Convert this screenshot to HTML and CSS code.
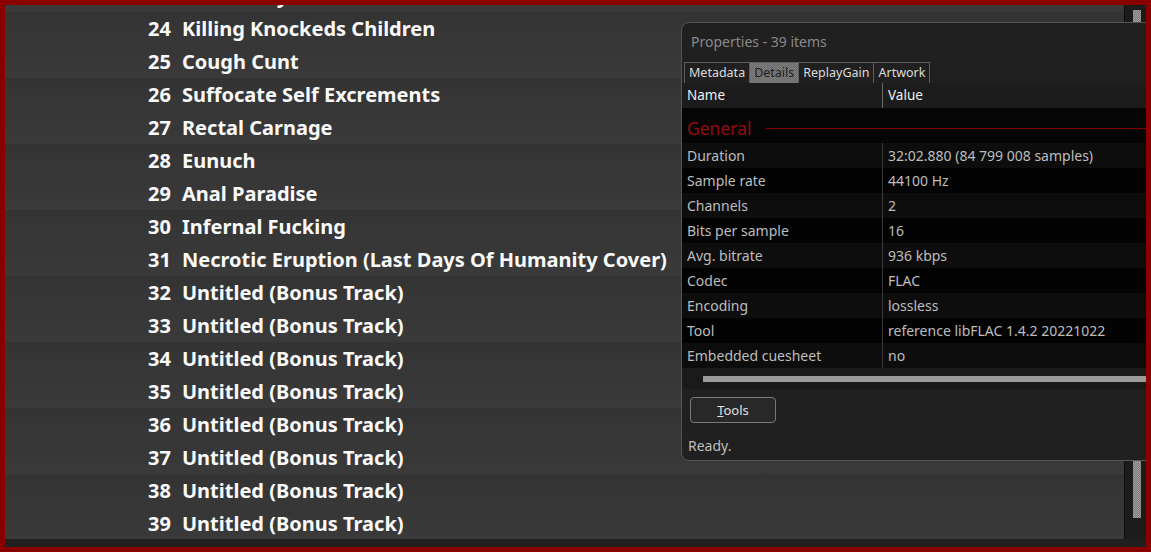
FILE: index.html
```html
<!DOCTYPE html>
<html lang="en">
<head>
    <meta charset="UTF-8">
    <title>Playlist - Properties</title>
    <link rel="stylesheet" href="styles.css">
</head>
<body>
    <div class="frame">
        <div class="main">
            <ol class="tracks">
                <li class="track"><span class="num">23</span><span class="title">Dead Body</span></li>
                <li class="track"><span class="num">24</span><span class="title">Killing Knockeds Children</span></li>
                <li class="track"><span class="num">25</span><span class="title">Cough Cunt</span></li>
                <li class="track"><span class="num">26</span><span class="title">Suffocate Self Excrements</span></li>
                <li class="track"><span class="num">27</span><span class="title">Rectal Carnage</span></li>
                <li class="track"><span class="num">28</span><span class="title">Eunuch</span></li>
                <li class="track"><span class="num">29</span><span class="title">Anal Paradise</span></li>
                <li class="track"><span class="num">30</span><span class="title">Infernal Fucking</span></li>
                <li class="track"><span class="num">31</span><span class="title">Necrotic Eruption (Last Days Of Humanity Cover)</span></li>
                <li class="track"><span class="num">32</span><span class="title">Untitled (Bonus Track)</span></li>
                <li class="track"><span class="num">33</span><span class="title">Untitled (Bonus Track)</span></li>
                <li class="track"><span class="num">34</span><span class="title">Untitled (Bonus Track)</span></li>
                <li class="track"><span class="num">35</span><span class="title">Untitled (Bonus Track)</span></li>
                <li class="track"><span class="num">36</span><span class="title">Untitled (Bonus Track)</span></li>
                <li class="track"><span class="num">37</span><span class="title">Untitled (Bonus Track)</span></li>
                <li class="track"><span class="num">38</span><span class="title">Untitled (Bonus Track)</span></li>
                <li class="track"><span class="num">39</span><span class="title">Untitled (Bonus Track)</span></li>
            </ol>
            <div class="vscroll"><div class="thumb"></div></div>
        </div>
        <div class="bottom-strip"></div>

        <div class="props">
            <div class="props-title">Properties - 39 items</div>
            <div class="tabs">
                <span class="tab">Metadata</span>
                <span class="tab active">Details</span>
                <span class="tab">ReplayGain</span>
                <span class="tab">Artwork</span>
            </div>
            <div class="listview">
                <div class="lv-head">
                    <span class="col-name">Name</span>
                    <span class="col-value">Value</span>
                </div>
                <div class="lv-body">
                    <div class="group"><span class="group-label">General</span><span class="group-line"></span></div>
                    <div class="row"><span class="col-name">Duration</span><span class="col-value">32:02.880 (84 799 008 samples)</span></div>
                    <div class="row"><span class="col-name">Sample rate</span><span class="col-value">44100 Hz</span></div>
                    <div class="row"><span class="col-name">Channels</span><span class="col-value">2</span></div>
                    <div class="row"><span class="col-name">Bits per sample</span><span class="col-value">16</span></div>
                    <div class="row"><span class="col-name">Avg. bitrate</span><span class="col-value">936 kbps</span></div>
                    <div class="row"><span class="col-name">Codec</span><span class="col-value">FLAC</span></div>
                    <div class="row"><span class="col-name">Encoding</span><span class="col-value">lossless</span></div>
                    <div class="row"><span class="col-name">Tool</span><span class="col-value">reference libFLAC 1.4.2 20221022</span></div>
                    <div class="row"><span class="col-name">Embedded cuesheet</span><span class="col-value">no</span></div>
                </div>
                <div class="hscroll"><div class="hthumb"></div></div>
            </div>
            <div class="actions">
                <button class="btn"><u>T</u>ools</button>
            </div>
            <div class="status">Ready.</div>
        </div>
    </div>
</body>
</html>
```

FILE: styles.css
```css
body {
    margin: 0;
    background: #8a0000;
    height: 552px;
    overflow: hidden;
}

.frame {
    position: relative;
    margin: 5px 5px 0 5px;
    height: 542px;
    overflow: hidden;
    display: flex;
    flex-direction: column;
    background: #383838;
}

.main {
    display: flex;
    height: 534px;
}

.tracks {
    flex: 1;
    list-style: none;
    margin: 0;
    padding: 0;
    overflow: hidden;
    font-family: 'Noto Sans', sans-serif;
    font-weight: 700;
    font-size: 20px;
    color: #fafafa;
}

.track {
    display: flex;
    align-items: center;
    height: 33px;
    background: linear-gradient(#363636, #3a3a3a);
}

.track:nth-child(even) {
    background: linear-gradient(#333333, #383838);
}

.track:first-child {
    margin-top: -26px;
}

.num {
    width: 166px;
    text-align: right;
    margin-right: 11px;
}

.title {
    white-space: nowrap;
}

.vscroll {
    width: 21px;
    border-left: 1px solid #0c0c0c;
    background: #1c1c1c;
    padding-top: 5px;
}

.thumb {
    width: 8px;
    height: 508px;
    margin-left: 8px;
    background-color: #8a8a8a;
    background-image: repeating-conic-gradient(#a0a0a0 0 25%, #7a7a7a 0 50%);
    background-size: 2px 2px;
}

.bottom-strip {
    height: 8px;
    background: #202020;
}

/* properties dialog */
.props {
    position: absolute;
    left: 676px;
    top: 17px;
    width: 490px;
    height: 437px;
    background: #202020;
    border: 1px solid #555;
    border-radius: 8px 0 0 8px;
    font-family: 'Noto Sans', sans-serif;
    font-size: 14px;
    color: #bdbdbd;
}

.props-title {
    height: 39px;
    line-height: 38px;
    padding-left: 9px;
    font-size: 14px;
    color: #8a8a8a;
}

.tabs {
    display: flex;
    padding-left: 2px;
    height: 21px;
}

.tab {
    border: 1px solid #5e5e5e;
    border-bottom: none;
    padding: 0 4px;
    line-height: 20px;
    font-size: 12.5px;
    color: #dcdcdc;
    margin-right: -1px;
}

.tab.active {
    background-color: #777;
    background-image: repeating-conic-gradient(#7e7e7e 0 25%, #6c6c6c 0 50%);
    background-size: 2px 2px;
    color: #1e1e1e;
}

.listview {
    background: #1a1a1a;
}

.lv-head {
    display: flex;
    height: 25px;
    line-height: 24px;
    background: #1c1c1c;
    color: #f0f0f0;
    font-size: 13.5px;
}

.col-name {
    width: 201px;
    padding-left: 5px;
    box-sizing: border-box;
    border-right: 1px solid #3a3a3a;
    white-space: nowrap;
}

.lv-head .col-name {
    border-right-color: #6a6a6a;
}

.col-value {
    padding-left: 5px;
    white-space: nowrap;
}

.lv-body {
    background: #050505;
}

.group {
    display: flex;
    align-items: center;
    height: 35px;
    padding-left: 5px;
}

.group-label {
    color: #940c0c;
    font-size: 17.5px;
    margin-right: 14px;
    padding-top: 4px;
}

.group-line {
    flex: 1;
    height: 1px;
    margin-top: 6px;
    background: #850000;
}

.row {
    display: flex;
    height: 25px;
    line-height: 25px;
    background: #0d0d0d;
}

.row:nth-child(odd) {
    background: #030303;
}

.hscroll {
    height: 21px;
    padding-top: 8px;
    box-sizing: border-box;
}

.hthumb {
    margin-left: 21px;
    height: 6px;
    background: #9a9a9a;
}

.actions {
    padding: 8px 0 0 8px;
    height: 40px;
    box-sizing: border-box;
}

.btn {
    width: 86px;
    height: 26px;
    background: #282828;
    border: 1px solid #787878;
    border-radius: 4px;
    color: #e0e0e0;
    font-family: 'Noto Sans', sans-serif;
    font-size: 13px;
    padding: 0;
}

.status {
    padding: 4px 0 0 6px;
    line-height: 26px;
    font-size: 14px;
    color: #bdbdbd;
}
```
